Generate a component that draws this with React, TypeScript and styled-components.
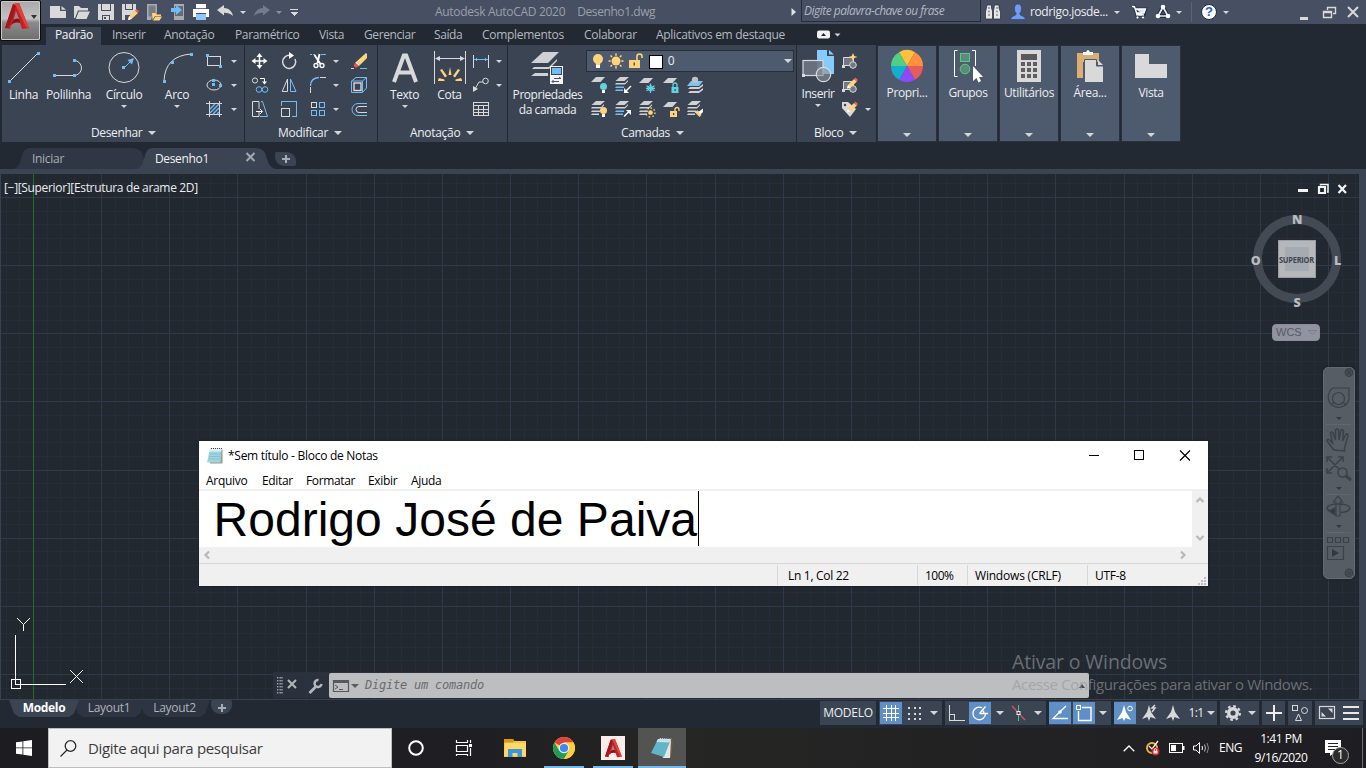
import React from "react";
import styled, { createGlobalStyle, css } from "styled-components";

const C = {
  frame: "#222932",
  panel: "#3b4453",
  title: "#474f62",
  tile: "#4e5a6d",
  canvas: "#212830",
  ink: "#d9d9d9",
  blue: "#70bdf5",
  gold: "#ffd37a",
  cyan: "#5fd4e0",
  on: "#5f8fc5",
};

const Global = createGlobalStyle`
  html, body { margin: 0; padding: 0; background: ${C.frame}; }
  *, *::before, *::after { box-sizing: border-box; }
  svg { display: block; flex: none; overflow: visible; }
`;

const Screen = styled.div`
  position: relative;
  width: 1366px;
  height: 768px;
  overflow: hidden;
  display: flex;
  flex-direction: column;
  background: ${C.frame};
  color: #eceef0;
  font: 12px/16px "Open Sans", "Noto Sans", sans-serif;
  letter-spacing: -0.3px;
  white-space: nowrap;
`;

const Text = styled.span<{ $ls?: number; $size?: number }>`
  letter-spacing: ${(p) => p.$ls ?? -0.3}px;
  ${(p) => p.$size && css`font-size: ${p.$size}px;`}
`;

const Arrow = styled.i<{ $w?: number; $c?: string }>`
  flex: none;
  width: 0;
  height: 0;
  border: solid transparent;
  border-width: ${(p) => ((p.$w ?? 6) > 6 ? 4 : 3)}px ${(p) => (p.$w ?? 6) / 2}px 0;
  border-top-color: ${(p) => p.$c ?? "#d4d6da"};
`;

const Cell = styled.div<{ $w: number; $align?: string }>`
  flex: none;
  width: ${(p) => p.$w}px;
  display: flex;
  align-items: center;
  justify-content: ${(p) => p.$align ?? "center"};
`;

type IconProps = { w?: number; h?: number; children: React.ReactNode; crisp?: boolean };
const Icon = ({ w = 16, h = 16, children, crisp }: IconProps) => (
  <svg width={w} height={h} viewBox={`0 0 ${w} ${h}`} fill="none" stroke={C.ink} strokeWidth="1" shapeRendering={crisp ? "crispEdges" : "auto"}>
    {children}
  </svg>
);

/* ---------- title bar ---------- */

const TitleBar = styled.header`
  height: 24px;
  flex: none;
  display: flex;
  align-items: center;
  background: ${C.title};
  padding-left: 46px;
`;

const TitleText = styled.div`
  flex: none;
  width: 359px;
  padding-left: 130px;
  display: flex;
  gap: 12px;
  color: #9aa0ab;
`;

const SearchField = styled.div`
  flex: none;
  width: 180px;
  height: 22px;
  margin-bottom: 2px;
  padding: 3px 0 0 2px;
  border: 1px solid #262d38;
  border-top: 0;
  background: ${C.title};
  color: #b3b8c1;
  font-style: italic;
`;

const Divider = styled.i`
  width: 1px;
  height: 20px;
  background: #5a6377;
`;

const AppButton = styled.div`
  position: absolute;
  left: 0;
  top: 0;
  width: 41px;
  height: 41px;
  border: 1px solid #0c0c0c;
  border-radius: 2px;
  background: linear-gradient(#a9a9a9, #c2c2c2 45%, #8b8b8b 55%, #6e6e6e);
  box-shadow: inset 0 0 0 1px #c9c9c9;
  display: flex;
  align-items: center;
  padding: 0 0 8px 4px;
  gap: 2px;
`;

const ALogo = ({ w, h }: { w: number; h: number }) => (
  <svg width={w} height={h} viewBox="0 0 24 27">
    <path d="M0 25L8 1L14 0L24 25L17 26L15 20Q10 18 6 22L5 26Z" fill="#c32127" />
    <path d="M8 1L14 0L24 25L21 24L11 3Z" fill="#e0433f" />
    <path d="M8 1L11 3L8 14L3 25L0 25Z" fill="#a5161c" />
    <path d="M11 8L14 16Q11 15 8.500 17Z" fill="#8e8e8e" />
    <path d="M8.500 17Q11 15 14 16L15 20Q10 18 6 22Z" fill="#8f1014" />
  </svg>
);

const pencil = (
  <g stroke="none">
    <path d="M6 16L7 12.500L13 6.500L16 9L9.500 15Z" fill={C.gold} />
    <path d="M13 6.500L14.500 5L17 7.500L15.700 9Z" fill="#f0605c" />
    <path d="M6 16L7 12.500L9.500 15Z" fill="#fff" />
  </g>
);

const NewFile = () => (
  <Icon><path stroke="none" fill={C.ink} d="M0 2H10V7H16V14H0ZM11.500 2L16 5.800H11.500Z" /></Icon>
);
const OpenFile = () => (
  <Icon><path stroke="none" fill={C.ink} d="M0 2H5L7 4H14V6.500H4L1 14H0ZM4.800 7.500H16L12.500 15H1.800Z" /></Icon>
);
const Save = () => (
  <Icon><path stroke="none" fill={C.ink} fillRule="evenodd" d="M0 0H3V7H13V0H16V16H12V11H4V16H0ZM4 0H12V6H4ZM5 12H11V16H5ZM6 13V15H8V13Z" /></Icon>
);
const SaveAs = () => (
  <Icon><path stroke="none" fill={C.ink} fillRule="evenodd" d="M0 0H3V6H11V0H14V6L9 11H3V16H0ZM4 0H10V5H4Z" />{pencil}</Icon>
);
const MobileOpen = () => (
  <Icon>
    <path stroke="none" fill="#a8abb0" d="M0 0H10V9H6L4 16H0Z" />
    <rect x="1.500" y="1.500" width="7" height="11" stroke="none" fill="#777c86" />
    <path stroke="none" fill={C.gold} d="M5 9H9L10 10.500H14V12H8L5.500 16ZM8.500 12.500H15L12.500 16.500H6Z" />
  </Icon>
);
const MobileSave = () => (
  <Icon>
    <path stroke="none" fill="#a8abb0" d="M3 0H13V16H3Z" />
    <rect x="4" y="2" width="8" height="10" stroke="none" fill="#646b78" />
    <path stroke="none" fill={C.blue} d="M0 4H5V1L11 6L5 11V8H0Z" />
  </Icon>
);
const Printer = () => (
  <Icon>
    <path stroke="none" fill="#fff" d="M3 0H13V4H3ZM0 5H16V13H13V9H3V13H0Z" />
    <rect x="3" y="10" width="10" height="6" stroke="none" fill="#8cc8f8" />
    <path d="M3 4.500H13" stroke="#6b7280" />
  </Icon>
);
const Undo = ({ dim, flip }: { dim?: boolean; flip?: boolean }) => (
  <Icon>
    <g transform={flip ? "translate(16 -1) scale(-1 1)" : "translate(0 -1)"}>
      <path stroke="none" fill={dim ? "#747b8a" : C.ink} d="M0 7L7 2V5Q14 5 16 13Q12 9.500 7 9.700V12.500Z" />
    </g>
  </Icon>
);

const Binoculars = () => (
  <Icon>
    <path stroke="#2f3645" fill="#e8e8e8" strokeWidth="0.800" d="M2 1H6.500V4L7.500 7V15H0.500V8ZM9.500 1H14V4L15.500 8V15H8.500V7Z" />
    <path stroke="#59606f" d="M4 3V13M12 3V13" strokeDasharray="2 1.500" />
  </Icon>
);
const UserIcon = () => (
  <Icon>
    <path stroke="#26407e" strokeWidth="0.600" fill="#6f9cf2" d="M8 0Q11.500 0 11.500 4.500Q11.500 8 9.700 9.500Q9.700 11.300 12.500 12Q15 12.700 15.500 15.500H0.500Q1 12.700 3.500 12Q6.300 11.300 6.300 9.500Q4.500 8 4.500 4.500Q4.500 0 8 0Z" />
  </Icon>
);
const Cart = () => (
  <Icon>
    <path stroke="#252e49" strokeWidth="3.200" d="M1 2.500H3.500L6 11H13L14.500 5H5" />
    <path fill="#dfe3ec" stroke="#fff" strokeWidth="1.300" d="M1 2.500H3.500L6 11H13M4.500 5H14.500L13 9H5.500Z" />
    <circle cx="6.500" cy="13.500" r="1.500" fill="#fff" stroke="#252e49" strokeWidth="0.700" />
    <circle cx="12" cy="13.500" r="1.500" fill="#fff" stroke="#252e49" strokeWidth="0.700" />
  </Icon>
);
const Network = () => (
  <Icon>
    <path stroke="#252e49" strokeWidth="4" strokeLinejoin="round" d="M8 3L3 12H13Z" />
    <path stroke="#e6e9f0" strokeWidth="1.700" d="M8 3L3 12H13Z" />
    <g fill="#fff" stroke="none"><circle cx="8" cy="3" r="2.300" /><circle cx="3" cy="12" r="2.300" /><circle cx="13" cy="12" r="2.300" /></g>
  </Icon>
);
const HelpDot = styled.i`
  width: 16px;
  height: 16px;
  border-radius: 50%;
  border: 1px solid #232b3c;
  background: #fafafa;
  color: #2560c0;
  font: bold 13px/14px "Liberation Sans", sans-serif;
  text-align: center;
  letter-spacing: 0;
`;

const TopBar = () => (
  <TitleBar>
    <Cell $w={24}><NewFile /></Cell>
    <Cell $w={24}><OpenFile /></Cell>
    <Cell $w={24}><Save /></Cell>
    <Cell $w={24}><SaveAs /></Cell>
    <Cell $w={26}><MobileOpen /></Cell>
    <Cell $w={21}><MobileSave /></Cell>
    <Cell $w={24}><Printer /></Cell>
    <Cell $w={24}><Undo /></Cell>
    <Cell $w={12}><Arrow $w={6} /></Cell>
    <Cell $w={26}><Undo dim flip /></Cell>
    <Cell $w={8}><Arrow $w={6} $c="#8a909c" /></Cell>
    <Cell $w={22}>
      <Icon w={8} h={8} crisp><path d="M0 1.500H8" /><path stroke="none" fill={C.ink} d="M0 4H8L4 8Z" /></Icon>
    </Cell>
    <TitleText><Text $ls={-0.3}>Autodesk AutoCAD 2020</Text><Text $ls={-0.42}>Desenho1.dwg</Text></TitleText>
    <Cell $w={137} $align="flex-end"><Icon w={10} h={10}><path stroke="none" fill="#e0e2e6" d="M0.500 1V9L5 5Z" /></Icon></Cell>
    <SearchField><Text $ls={-0.5}>Digite palavra-chave ou frase</Text></SearchField>
    <Cell $w={24}><Binoculars /></Cell>
    <Cell $w={25}><UserIcon /></Cell>
    <Cell $w={82} $align="flex-start"><Text $ls={-0.38}>rodrigo.josde...</Text></Cell>
    <Cell $w={10}><Arrow $w={6} /></Cell>
    <Cell $w={34}><Cart /></Cell>
    <Cell $w={14}><Network /></Cell>
    <Cell $w={18}><Arrow $w={6} /></Cell>
    <Cell $w={6}><Divider /></Cell>
    <Cell $w={30}><HelpDot>?</HelpDot></Cell>
    <Cell $w={4}><Arrow $w={6} /></Cell>
    <Cell $w={131} $align="flex-end">
      <Icon w={59} h={14}>
        <path d="M0 13.500H8" strokeWidth="3" />
        <path d="M27.500 5V2.500H35.500V8.500H33M23.500 6.500H31.500V12.500H23.500ZM23 7.500H32" strokeWidth="1.400" />
        <path d="M48 2L58 12M58 2L48 12" strokeWidth="2" />
      </Icon>
    </Cell>
  </TitleBar>
);

/* ---------- ribbon tabs ---------- */

const RibbonTabs = styled.nav`
  height: 21px;
  flex: none;
  display: flex;
  align-items: flex-end;
  padding-left: 46px;
`;

const RibbonTab = styled.div<{ $w: number; $active?: boolean }>`
  flex: none;
  width: ${(p) => p.$w}px;
  height: 18px;
  line-height: 15px;
  color: #b4b9c1;
  ${(p) => p.$active && css`
    margin-right: 11px;
    padding-left: 9px;
    background: ${C.panel};
    color: #f2f3f4;
  `}
`;

const TABS: [string, number, number][] = [
  ["Inserir", 52, -0.35], ["Anotação", 71, -0.3], ["Paramétrico", 84, -0.37], ["Vista", 45, -0.35],
  ["Gerenciar", 70, -0.4], ["Saída", 48, -0.4], ["Complementos", 102, -0.3], ["Colaborar", 72, -0.3],
  ["Aplicativos em destaque", 161, -0.3],
];

/* ---------- ribbon panels ---------- */

const Ribbon = styled.section`
  height: 97px;
  flex: none;
  display: flex;
  gap: 1px;
  padding-left: 2px;
`;

const Panel = styled.div<{ $w: number }>`
  width: ${(p) => p.$w}px;
  height: 97px;
  background: ${C.panel};
  display: flex;
  flex-direction: column;
`;

const PanelBody = styled.div`
  height: 78px;
  display: flex;
`;

const PanelName = styled.div<{ $x?: number }>`
  height: 19px;
  padding-left: ${(p) => p.$x ?? 0}px;
  padding-top: 1px;
  display: flex;
  align-items: center;
  gap: 6px;
`;

const BigButton = styled.div<{ $w: number; $top?: number }>`
  width: ${(p) => p.$w}px;
  padding-top: ${(p) => p.$top ?? 6}px;
  display: flex;
  flex-direction: column;
  align-items: center;
  line-height: 15px;
  text-align: center;
  & > svg { margin-bottom: 4px; }
  & > i { margin-top: 3px; }
`;

const ToolGrid = styled.div<{ $cols: string; $rows?: number; $top?: number }>`
  display: grid;
  padding-top: ${(p) => p.$top ?? 4}px;
  grid-template-columns: ${(p) => p.$cols};
  grid-template-rows: repeat(${(p) => p.$rows ?? 3}, 24px);
  align-items: center;
  justify-items: center;
`;

const dot = (x: number, y: number) => <rect x={x - 1.5} y={y - 1.5} width="3" height="3" fill={C.blue} stroke="none" />;

const DrawPanel = () => (
  <Panel $w={242}>
    <PanelBody>
      <BigButton $w={43}><Icon w={32} h={32}><path d="M2 30L30 2" />{dot(1.5, 30.5)}{dot(30.5, 2.5)}</Icon><Text>Linha</Text></BigButton>
      <BigButton $w={47}><Icon w={32} h={32}><path d="M1 24.500H21M21 9.500A7.500 7.500 0 0 1 21 24.500" />{dot(1.5, 24.5)}{dot(21.5, 24.5)}{dot(21.5, 9.5)}</Icon><Text>Polilinha</Text></BigButton>
      <BigButton $w={64}><Icon w={32} h={32}><circle cx="16" cy="16.500" r="15" /><path stroke={C.blue} d="M16 17L23 10" />{dot(15.5, 16.5)}<path fill={C.blue} stroke="none" d="M26 7L19.500 9L24 13.500Z" /></Icon><Text>Círculo</Text><Arrow $w={6} /></BigButton>
      <BigButton $w={42}><Icon w={32} h={32}><path d="M3 30Q4 5 30 3" />{dot(3.5, 30.5)}{dot(11.5, 11.5)}{dot(30.5, 3.5)}</Icon><Text>Arco</Text><Arrow $w={6} /></BigButton>
      <ToolGrid $cols="32px 8px">
        <Icon crisp><rect x="1.500" y="3.500" width="13" height="9" />{dot(1.5, 2.5)}{dot(14.5, 13.5)}</Icon><Arrow $w={6} />
        <Icon><ellipse cx="8" cy="8" rx="7" ry="5" />{dot(7.5, 7.5)}{dot(7.5, 3.5)}{dot(14.5, 8.5)}</Icon><Arrow $w={6} />
        <Icon><path d="M3.500 0V16M13.500 0V16M0 2.500H16M0 13.500H16" /><path stroke={C.blue} d="M4 8L9 3M4 12L13 3M7 13L13 7M11 13L13 11" strokeWidth="1.400" /></Icon><Arrow $w={6} />
      </ToolGrid>
    </PanelBody>
    <PanelName $x={89}><Text $ls={-0.35}>Desenhar</Text><Arrow $w={8} /></PanelName>
  </Panel>
);

const ModifyPanel = () => (
  <Panel $w={132}>
    <PanelBody>
      <ToolGrid $cols="29px 30px 27px 10px 36px">
        <Icon><path stroke="#fff" strokeWidth="1.500" d="M7.500 2V14M2 8H14" /><path fill="#fff" stroke="none" d="M7.500 0L10.500 4H4.500ZM7.500 16L4.500 12H10.500ZM-0.500 8L3.500 5V11ZM15.500 8L11.500 11V5Z" /></Icon>
        <Icon><path strokeWidth="1.500" d="M9.500 2.500A6.500 6.500 0 1 0 14 6" /><path fill="#fff" stroke="none" d="M8 -1L13 2.500L8 6Z" /></Icon>
        <Icon><path stroke={C.blue} strokeDasharray="2 1" d="M0 1.500H6" /><path d="M11 1.500H16" stroke={C.blue} /><path stroke="#fff" strokeWidth="1.900" d="M4.500 2L10.500 11M9.500 1L7.500 10" /><circle cx="6" cy="12.500" r="2" stroke="#fff" strokeWidth="1.300" /><circle cx="12" cy="12.500" r="2" stroke="#fff" strokeWidth="1.300" /></Icon>
        <Arrow $w={6} />
        <Icon><path fill={C.gold} stroke="none" d="M15 0L16 1V5L9 12L5.500 8.500Z" /><path fill="#f6f6f6" stroke="none" d="M5.500 8.500L9 12L7.800 13L4.300 9.800Z" /><path fill="#f0504c" stroke="none" d="M4.300 9.800L7.800 13Q5.500 15.500 3.500 14Q2 12 4.300 9.800Z" /><path d="M0 15.500H3" /><path stroke={C.blue} d="M9 15.500H16" /></Icon>

        <Icon><circle cx="3" cy="3.500" r="2.600" /><path d="M8 1.500H12.500V5" stroke="#fff" /><path fill="#fff" stroke="none" d="M10 4.500H15L12.500 7.500Z" /><g stroke={C.blue}><circle cx="7" cy="12.500" r="2.800" /><circle cx="13" cy="12.500" r="2.800" /></g></Icon>
        <Icon><path d="M6.500 2V14.500H1.200Z" /><path d="M9.500 2V14.500H15Z" stroke={C.blue} /></Icon>
        <Icon><path stroke={C.blue} d="M0.500 9Q0.500 1 9 0.500" strokeWidth="1.300" /><path d="M0.500 10V16M10 0.500H16" /></Icon>
        <Arrow $w={6} />
        <Icon><rect x="3" y="6" width="7" height="7.500" strokeWidth="1.400" /><path stroke={C.blue} d="M0.500 4L5 0.500H15.500V11L11.500 15.500H0.500ZM0.500 4H11.500V15M11.500 4L15.500 0.500" /></Icon>

        <Icon><path d="M7 11V15.500H0.500V0.500H7V8" /><path stroke="#fff" d="M4 10.500H10M8 8L10.500 10.500L8 13" /><path stroke={C.blue} d="M9 0.500H10.500L15.500 15.500H8" /></Icon>
        <Icon crisp><path stroke={C.blue} d="M0.500 5V0.500H15.500V15.500H11" /><rect x="0.500" y="7.500" width="8" height="8" /></Icon>
        <Icon crisp><rect x="1.500" y="1.500" width="5" height="5" /><g stroke={C.blue}><rect x="9.500" y="1.500" width="5" height="5" /><rect x="1.500" y="9.500" width="5" height="5" /><rect x="9.500" y="9.500" width="5" height="5" /></g></Icon>
        <Arrow $w={6} />
        <Icon><path d="M16 5.500H8A3 3 0 0 0 8 11.500H16" /><path stroke={C.blue} d="M16 2.500H7A6 6 0 0 0 7 14.500H16" /></Icon>
      </ToolGrid>
    </PanelBody>
    <PanelName $x={33}><Text>Modificar</Text><Arrow $w={8} /></PanelName>
  </Panel>
);

const AnnotatePanel = () => (
  <Panel $w={129}>
    <PanelBody>
      <BigButton $w={53}><Icon w={32} h={32}><path strokeWidth="4" d="M5 31L14.800 4.500H17.200L27 31M8.500 21.500H23.500" /></Icon><Text $ls={-0.4}>Texto</Text><Arrow $w={6} /></BigButton>
      <BigButton $w={37}>
        <Icon w={32} h={32}>
          <path d="M0.500 0V33M31.500 0V33M3 7.500H29" /><path fill={C.ink} stroke="none" d="M1 7.500L6 5V10ZM31 7.500L26 5V10Z" />
          <path fill={C.gold} stroke="none" d="M16 16L17.500 24H14.500ZM6 19L8 18L13 25L11 26.500ZM26 19L24 18L19 25L21 26.500ZM4 29L5 27L10.500 28.500V30H4ZM28 29L27 27L21.500 28.500V30H28Z" />
        </Icon><Text $ls={-0.35}>Cota</Text>
      </BigButton>
      <ToolGrid $cols="26px 10px">
        <Icon crisp><path d="M0.500 2V15M15.500 2V15" /><path d="M1 6.500H15M3.500 5V8M12.500 5V8" stroke={C.blue} /></Icon><Arrow $w={6} />
        <Icon><circle cx="12.500" cy="4" r="2.800" /><path d="M10 5H6L2 12" /><path fill={C.ink} stroke="none" d="M0 15V9L5 12Z" /></Icon><Arrow $w={6} />
        <Icon crisp><rect x="0.500" y="1.500" width="15" height="13" /><path d="M0 4.500H16M0 8.500H16M0 11.500H16M5.500 5V14M10.500 5V14" /></Icon>
      </ToolGrid>
    </PanelBody>
    <PanelName $x={32}><Text>Anotação</Text><Arrow $w={8} /></PanelName>
  </Panel>
);

const LayerCombo = styled.div`
  width: 208px;
  height: 22px;
  margin: 5px 0 1px -1px;
  border: 1px solid #272e39;
  background: ${C.tile};
  display: flex;
  align-items: center;
`;

const Swatch = styled.i`
  width: 14px;
  height: 14px;
  border: 1px solid #000;
  background: #fff;
  margin-top: 2px;
`;

const sheet = (y: number, c = "#cfd1d4") => <path stroke="none" fill={c} d={`M5 ${y}H14L9.500 ${y + 5}H0Z`} />;
const stack = (mid = "#cfd1d4") => (
  <g stroke="none">
    <path fill="#cfd1d4" d="M5 0H14L9.500 4H0.500Z" />
    <path fill="#cfd1d4" d="M1 6H10L13 3V4.500L10 7.500H0Z" />
    <path fill={mid} d="M1 9.500H9V11H0ZM1 12.500H8V14H0Z" />
  </g>
);
const miniBulb = (c: string) => <g stroke="none"><circle cx="12.500" cy="9.500" r="3.500" fill={c} /><rect x="11" y="13" width="3" height="3" fill="#fff" /></g>;
const miniLock = (c: string, open?: boolean) => (
  <g><path stroke={c} strokeWidth="1.300" d={open ? "M12 10V8.500A2 2 0 0 1 16 8.500V10" : "M10 10V8A2 2 0 0 1 14 8V10"} /><rect x={open ? 7 : 8.5} y="10" width="7" height="6" fill={c} stroke="none" /><rect x={open ? 10 : 11.5} y="12" width="1.200" height="2" fill={C.panel} stroke="none" /></g>
);

const LayersPanel = () => (
  <Panel $w={288}>
    <PanelBody>
      <BigButton $w={79}>
        <Icon w={32} h={32}>
          <g stroke="none" fill="#cfd1d4" transform="translate(-1 0)">
            <path d="M12 1H28L17 12H0Z" /><path d="M1 18L3 16H18L26 8V10L18 18ZM0 25L4 22H17V25Z" />
            <rect x="19" y="15" width="13" height="18" fill="#f3f3f3" />
            <rect x="20.500" y="16.500" width="10" height="7" fill={C.blue} stroke="#3b4453" />
            <path d="M23 27.500H30M21 30.500H28M28 26L30 27.500M22.500 29L21 30.500L22.500 32" stroke="#4c5361" />
          </g>
        </Icon>
        <Text $ls={-0.45}>Propriedades<br />da camada</Text>
      </BigButton>
      <div>
        <LayerCombo>
          <Cell $w={22}><Icon><circle cx="8" cy="6" r="5" fill={C.gold} stroke="none" /><path fill={C.gold} stroke="none" d="M5 8H11L10 12H6Z" /><rect x="6" y="12" width="4" height="3" fill="#fff" stroke="none" /></Icon></Cell>
          <Cell $w={14}><Icon><circle cx="8" cy="8" r="4.500" fill={C.gold} stroke="none" /><path stroke={C.gold} strokeWidth="1.600" d="M8 0.500V2.700M8 13.300V15.500M0.500 8H2.700M13.300 8H15.500M2.500 2.500L4 4M12 12L13.500 13.500M13.500 2.500L12 4M4 12L2.500 13.500" /></Icon></Cell>
          <Cell $w={23}><Icon><rect x="2" y="7" width="11" height="8" fill={C.gold} stroke="none" /><path stroke={C.gold} strokeWidth="1.600" d="M10 7V3.500A2.500 2.500 0 0 1 15 3.500V5" /><rect x="6.500" y="9.500" width="1.500" height="3" fill={C.tile} stroke="none" /></Icon></Cell>
          <Cell $w={19}><Swatch /></Cell>
          <Cell $w={119} $align="flex-start"><Text>&nbsp;0</Text></Cell>
          <Arrow $w={8} />
        </LayerCombo>
        <ToolGrid $cols="repeat(5, 24px)" $rows={2} $top={0}>
          <Icon>{sheet(0)}{miniBulb(C.cyan)}</Icon>
          <Icon>{stack(C.blue)}<path stroke="#fff" strokeWidth="1.500" d="M16 9L11 14" /><path fill="#fff" stroke="none" d="M9 16V11L14 16Z" /></Icon>
          <Icon>{sheet(1)}<path stroke={C.cyan} strokeWidth="1.300" d="M11.500 6.500V16M7.500 8.700L15.500 13.800M15.500 8.700L7.500 13.800M7 11.300H16" /><circle cx="11.500" cy="11.300" r="2.600" stroke={C.cyan} /></Icon>
          <Icon>{sheet(1)}{miniLock(C.cyan)}</Icon>
          <Icon><path stroke="none" fill="#cfd1d4" d="M1 12L3 10H12L16 7V9L12 12ZM1 16L3 14H12L16 11V13L12 16Z" /><path stroke="none" fill="#7fc4f7" d="M4 4H16L12 9H0Z" /><circle cx="8" cy="3" r="3.200" fill="#bfc1c5" stroke="none" /></Icon>
          <Icon>{stack()}{miniBulb(C.gold)}</Icon>
          <Icon>{stack(C.blue)}<path stroke="#fff" strokeWidth="1.500" d="M9 15.500L14 10.500" /><path fill="#fff" stroke="none" d="M16 9V14L11 9Z" /></Icon>
          <Icon>{stack()}<circle cx="11.500" cy="11.500" r="2.600" fill={C.gold} stroke={C.panel} strokeWidth="0.500" /><path stroke={C.gold} strokeWidth="1.400" strokeDasharray="1.500 2" d="M11.500 7A4.500 4.500 0 1 1 11.400 7" /></Icon>
          <Icon>{sheet(1)}{miniLock(C.gold, true)}</Icon>
          <Icon>{stack()}<path fill="#fff" stroke="none" d="M10 9L12 10.500L16 7.500V11L13 14Z" /><path fill={C.gold} stroke="none" d="M7.500 11L12.500 16L14.500 14L10 9.500Z" /></Icon>
        </ToolGrid>
      </div>
    </PanelBody>
    <PanelName $x={113}><Text $ls={-0.4}>Camadas</Text><Arrow $w={8} /></PanelName>
  </Panel>
);

const blockMini = <g><path fill="#737984" d="M1.500 4.500H11.500V12.500H1.500Z" /><circle cx="11" cy="12" r="3.300" fill="#737984" /><rect x="0" y="12" width="3" height="3" fill={C.ink} stroke="none" /></g>;

const BlockPanel = () => (
  <Panel $w={79}>
    <PanelBody>
      <BigButton $w={42} $top={5}>
        <Icon w={32} h={32}>
          <path fill="#86cbfb" stroke="none" d="M15 0H25V6H32V24H15Z" /><path fill="#86cbfb" stroke="none" d="M27 0L32 4.500H27Z" />
          <rect x="1" y="10.500" width="20" height="15" fill="#6f7682" fillOpacity="0.900" strokeWidth="1.200" />
          <circle cx="21.500" cy="24.500" r="7.200" fill="#8c929c" fillOpacity="0.600" strokeWidth="1.200" />
          <rect x="0" y="24" width="3" height="3" fill={C.ink} stroke="none" />
        </Icon>
        <Text $ls={-0.45}>Inserir</Text><Arrow $w={6} />
      </BigButton>
      <ToolGrid $cols="22px 14px">
        <Icon>{blockMini}<path stroke="none" fill={C.gold} d="M11 0L12.300 3L15.500 4L12.300 5L11 8.500L9.700 5L6.500 4L9.700 3Z" /></Icon><span />
        <Icon>{blockMini}<g transform="translate(-1 -4.500)">{pencil}</g></Icon><span />
        <Icon><path stroke="none" fill={C.ink} d="M0 1H6L14 8L8 16L0 7Z" /><circle cx="3" cy="4" r="1.200" fill={C.panel} stroke="none" /><g transform="translate(-1 -4.500)">{pencil}</g></Icon><Arrow $w={6} />
      </ToolGrid>
    </PanelBody>
    <PanelName $x={17}><Text>Bloco</Text><Arrow $w={8} /></PanelName>
  </Panel>
);

const Collapsed = styled.div`
  width: 60px;
  height: 97px;
  border: 1px solid #2a313c;
  background: ${C.tile};
  display: flex;
  flex-direction: column;
  align-items: center;
  padding: 4px 0 4px;
  & > span { margin: 3px 0 auto; line-height: 15px; }
`;

const WHEEL = ["#ffc13d", "#ff913e", "#e85a5c", "#8a4bfb", "#12b0cb", "#50cf86"];
const ColorWheel = () => (
  <Icon w={32} h={32}>
    {WHEEL.map((c, i) => {
      const a = ((i * 60 - 120) * Math.PI) / 180;
      const b = a + Math.PI / 3;
      const p = (t: number) => `${(16 + 16 * Math.cos(t)).toFixed(2)} ${(16 + 16 * Math.sin(t)).toFixed(2)}`;
      return <path key={c} fill={c} stroke="none" d={`M16 16L${p(a)}A16 16 0 0 1 ${p(b)}Z`} />;
    })}
  </Icon>
);

const COLLAPSED: [string, React.ReactNode][] = [
  ["Propri...", <ColorWheel />],
  ["Grupos", (
    <Icon w={32} h={32}>
      <path stroke="#fff" d="M5.500 0.500H2.500V26.500H5.500M20 0.500H23.500V16" />
      <g stroke="#4fcf80" fill="#5d8a7c"><rect x="8.500" y="3.500" width="9" height="8" /><circle cx="13" cy="19" r="4.800" /></g>
      <path stroke="none" fill="#fff" d="M21 16V31L24.500 28L26.500 32.500L29 31L27 27H31Z" />
    </Icon>
  )],
  ["Utilitários", (
    <Icon w={32} h={32} crisp>
      <rect x="4" y="0" width="24" height="32" fill={C.ink} stroke="none" /><rect x="8" y="4" width="16" height="6" fill="#5a5a5a" stroke="none" />
      <g fill="#5f5f5f" stroke="none">{[8, 14, 20].map((x) => [12, 18, 24].map((y) => <rect key={`${x}-${y}`} x={x} y={y} width="4" height="4" />))}</g>
    </Icon>
  )],
  ["Área...", (
    <Icon w={32} h={32}>
      <path fill="#dcae72" stroke="none" d="M3 3H25V12H9V28H3Z" /><path fill="#fff" stroke="none" d="M9 5V2H12Q14 -2 16 2H19V5Z" />
      <path fill={C.ink} stroke={C.tile} d="M10.500 9.500H22.500V16H29.500V32.500H10.500Z" /><path fill={C.ink} stroke="none" d="M24 10L29 15H24Z" />
    </Icon>
  )],
  ["Vista", <Icon w={32} h={32}><path fill={C.ink} stroke="none" d="M0 4H14V14H32V28H0Z" /></Icon>],
];

/* ---------- document tabs ---------- */

const DocTabs = styled.div`
  height: 32px;
  flex: none;
  display: flex;
  align-items: flex-end;
  padding: 0 0 5px 14px;
  background: linear-gradient(${C.frame} 27px, ${C.panel} 27px);
`;

const DocTab = styled.div<{ $active?: boolean }>`
  width: 138px;
  height: 22px;
  margin-right: -15px;
  padding: 4px 0 0 18px;
  display: flex;
  align-items: flex-start;
  line-height: 15px;
  background: ${(p) => (p.$active ? C.panel : "#2f3744")};
  color: ${(p) => (p.$active ? "#f0f1f2" : "#a9aeb7")};
  clip-path: path("M0 22 Q5 20 7 12 Q9 1 15 1 H119 Q128 1 130 12 Q132 20 138 22 Z");
`;

const PlusTab = styled.div<{ $bottom?: boolean }>`
  width: 21px;
  height: 14px;
  margin-bottom: ${(p) => (p.$bottom ? 0 : 3)}px;
  border-radius: ${(p) => (p.$bottom ? "2px 2px 9px 9px" : "2px 9px 2px 9px")};
  background: ${C.panel};
  display: flex;
  align-items: center;
  justify-content: center;
  padding-top: ${(p) => (p.$bottom ? 2 : 0)}px;
`;

const Plus = () => <Icon w={8} h={8} crisp><path strokeWidth="2" stroke="#a8adb5" d="M4 0V8M0 4H8" /></Icon>;

/* ---------- drawing area ---------- */

const Workspace = styled.main`
  position: relative;
  height: 525px;
  flex: none;
  background: ${C.canvas};
  border-left: 1px solid #394252;
  border-right: 7px solid ${C.panel};
`;

const Pin = styled.div<{ $x: number; $y: number }>`
  position: absolute;
  left: ${(p) => p.$x - 1}px;
  top: ${(p) => p.$y - 174}px;
`;

const GridLines = () => {
  const step = 13.632;
  const v = Array.from({ length: 103 }, (_, i) => ({ at: Math.round(34 + (i - 2) * step) - 1.5, major: (i - 2) % 5 === 0 }));
  const h = Array.from({ length: 42 }, (_, i) => ({ at: Math.round(197 + (i - 1) * step) - 173.5, major: (i - 1) % 5 === 0 }));
  return (
    <svg width="1358" height="525" viewBox="0 0 1358 525" shapeRendering="crispEdges">
      {[false, true].map((m) => (
        <g key={String(m)} stroke={m ? "#30394a" : "#262d38"}>
          {h.filter((l) => l.major === m && l.at < 525).map((l) => <path key={l.at} d={`M0 ${l.at}H1358`} />)}
          {v.filter((l) => l.major === m && l.at < 1358).map((l) => <path key={l.at} d={`M${l.at} 0V525`} />)}
        </g>
      ))}
      <path stroke="#207024" d="M32.500 0V525" />
    </svg>
  );
};

const Ucs = () => (
  <svg width="76" height="76" viewBox="0 0 76 76" fill="none" stroke="#fff">
    <g shapeRendering="crispEdges"><path d="M4.500 18V67.500H55" /><rect x="0.500" y="62.500" width="9" height="9" /></g>
    <path d="M6 1L12.500 7.500L19 1M12.500 7.500V14M59 53L72 66M72 53L59 66" />
  </svg>
);

const ViewCube = () => (
  <svg width="90" height="96" viewBox="0 0 90 96" fontFamily="Open Sans, sans-serif">
    <circle cx="45" cy="48" r="39.500" fill="none" stroke="#444a54" strokeWidth="9" />
    <rect x="26.500" y="29.500" width="37" height="37" fill="#b5b7ba" stroke="#9a9c9f" />
    <rect x="33" y="36" width="24" height="24" fill="#a4abb3" />
    <text x="44.500" y="52" textAnchor="middle" fontSize="9.500" fontWeight="700" fill="#40454d" textLength="35" lengthAdjust="spacingAndGlyphs">SUPERIOR</text>
    <g fontSize="12.500" fontWeight="800" fill="#b9bbbe" textAnchor="middle">
      <text x="45" y="12.500">N</text><text x="45" y="95.500">S</text><text x="3.500" y="54">O</text><text x="85.500" y="54">L</text>
    </g>
  </svg>
);

const WcsPill = styled.div`
  width: 48px;
  height: 17px;
  border-radius: 4px;
  border: 1px solid #8b8d98;
  background: #9193a0;
  color: #555966;
  display: flex;
  align-items: center;
  gap: 6px;
  padding: 0 0 1px 3px;
  font: 11px/14px "Liberation Sans", sans-serif;
  letter-spacing: 0;
`;

const NavBar = styled.div`
  width: 32px;
  height: 212px;
  border-radius: 5px;
  background: #575d64;
  border: 1px solid #666b71;
  box-shadow: 0 0 2px #14181d;
  & > svg { margin: 0 0 0 -1px; }
`;

const NavIcons = () => (
  <svg width="31" height="210" viewBox="0 0 31 210" fill="none" stroke="#3b4149" strokeWidth="1.200">
    <circle cx="26" cy="4.500" r="3.800" fill="#484e56" stroke="#3b4149" /><path d="M24 2.500L28 6.500M28 2.500L24 6.500" />
    <path d="M10 20H26V31A10.500 10.500 0 1 1 10 20Z" /><circle cx="15.500" cy="30.500" r="6" /><path d="M8 37L11 34M23 37L20 34" />
    <path d="M13 49H19L16 52Z M13 119H19L16 122Z M13 157H19L16 160Z" fill="#333941" stroke="none" />
    <path d="M3 56.500H28M3 126.500H28M3 164.500H28" stroke="#62676d" />
    <path strokeWidth="1.500" d="M11 82Q7 77 4 73Q4 71 6 71.500L9.500 75L7.500 65Q9 63 10 65L12.500 72L12.500 62Q14 60 15.500 62L16 72L18 62Q20 61 20.500 63L19.500 73L23 66Q25 65 25 68L21.500 80V83Z" />
    <path strokeWidth="1.500" d="M5 90L19 104M19 90L5 104M4 94V89H9M15 89H20V94M4 100V105H9" /><circle cx="19.500" cy="104.500" r="4.500" fill="#575d64" strokeWidth="1.500" /><path d="M23 108L28 112" strokeWidth="3" />
    <path d="M13 148V134H10.500L15 128L19.500 134H17V148Z" /><path strokeWidth="1.500" d="M12 144Q4 143 4 140Q5 136 15 136Q26 136 27 140Q26 144 18 144.500" /><path fill="#333941" d="M6 143L12 140V147Z" />
    <path d="M4.500 169.500H9.500V174.500H4.500ZM12.500 169.500H17.500V174.500H12.500ZM20.500 169.500H25.500V174.500H20.500ZM4.500 178.500H20.500V191.500H4.500Z" /><path d="M9 181V189L16 185Z" fill="#333941" stroke="none" />
    <circle cx="26" cy="205" r="3.800" fill="#484e56" /><path d="M24 204H28M24 206H28" />
  </svg>
);

/* ---------- command line ---------- */

const CommandDock = styled.div`
  width: 816px;
  height: 26px;
  display: flex;
  align-items: center;
  background: rgba(44, 50, 62, 0.9);
`;

const CommandInput = styled.div`
  width: 760px;
  height: 25px;
  margin: 1px 0 0 auto;
  padding-left: 4px;
  border-radius: 2px;
  background: #bcbec0;
  color: #6a6c6f;
  display: flex;
  align-items: center;
  gap: 2px;
  font: italic 12px/16px "DejaVu Sans Mono", monospace;
  & > span { margin: -1px 0 0 4px; letter-spacing: -0.22px; }
  & > i:last-child { margin-left: auto; margin-right: 4px; transform: rotate(180deg); }
`;

const Watermark = styled.div`
  color: rgba(150, 152, 154, 0.65);
  font-size: 15px;
  line-height: 20px;
`;

const WatermarkTitle = styled.div`
  font-size: 19.500px;
  line-height: 24px;
  letter-spacing: -0.15px;
`;

/* ---------- notepad ---------- */

const Notepad = styled.div`
  width: 1009px;
  height: 145px;
  background: #fff;
  color: #000;
  box-shadow: 0 0 2px #101318;
`;

const NoteTitle = styled.div`
  height: 30px;
  display: flex;
  align-items: center;
  padding: 0 18px 1px 8px;
  gap: 5px;
  & > svg:last-child { margin-left: auto; }
`;

const NoteMenu = styled.div`
  height: 20px;
  display: flex;
  align-items: center;
  padding: 1px 0 0 7px;
  border-bottom: 2px solid #f0f0f0;
`;

const NoteBody = styled.div`
  height: 56px;
  display: flex;
  background: #f0f0f0;
`;

const NotePage = styled.div`
  width: 993px;
  background: #fff;
  padding-left: 14.5px;
  display: flex;
  align-items: flex-start;
  overflow: hidden;
  font: 48px/57px "Liberation Sans", Arial, sans-serif;
  letter-spacing: 0.03px;
`;

const Caret = styled.i`
  width: 1px;
  height: 55px;
  margin-left: 1px;
  background: #000;
`;

const HScroll = styled.div`
  height: 16px;
  background: #f0f0f0;
  display: flex;
  align-items: center;
  justify-content: space-between;
  padding: 0 21px 1px 4px;
`;

const NoteStatus = styled.div`
  height: 23px;
  border-top: 1px solid #d7d7d7;
  background: #f0f0f0;
  display: flex;
  padding-left: 578px;
  & > svg { margin: 13px 0 0 auto; }
`;

const StatusField = styled.div<{ $w: number; $pad?: number }>`
  width: ${(p) => p.$w}px;
  height: 20px;
  margin-top: 1px;
  padding: 3px 0 0 ${(p) => p.$pad ?? 7}px;
  border-left: 1px solid #d7d7d7;
`;

const Chevron = ({ r }: { r: number }) => (
  <svg width="8" height="8" viewBox="0 0 8 8"><path transform={`rotate(${r} 4 4)`} d="M0.500 6L4 2.500L7.500 6" fill="none" stroke="#b8b8b8" strokeWidth="2.200" /></svg>
);

const VScroll = styled.div`
  width: 16px;
  display: flex;
  flex-direction: column;
  align-items: center;
  justify-content: space-between;
  padding: 5px 0 5px;
`;

const NoteIcon = ({ size = 16 }: { size?: number }) => (
  <svg width={size} height={size} viewBox="0 0 16 16">
    <path d="M4 1.500H15.500V15.500H3Z" fill="#9c9a86" /><path d="M3 0.500H14.500L13.500 14.500H0Z" fill="#9fd5de" /><path d="M3 0.500H14.500L14.200 3.500H2.500Z" fill="#e2eff1" />
    <path d="M2.500 6H14M2 8.500H13.500M1.500 11H13.300" stroke="#76bccb" strokeWidth="0.700" /><path d="M4 0.500H15" stroke="#444" strokeDasharray="1 1" />
  </svg>
);

const NotepadWindow = () => (
  <Notepad>
    <NoteTitle>
      <NoteIcon />
      <Text $ls={-0.28}>*Sem título - Bloco de Notas</Text>
      <svg width="101" height="11" viewBox="0 0 101 11" fill="none" stroke="#000"><path d="M0 5.500H10M45.500 0.500H54.500V9.500H45.500Z" shapeRendering="crispEdges" /><path d="M91 0.500L101 10.500M101 0.500L91 10.500" strokeWidth="1.200" /></svg>
    </NoteTitle>
    <NoteMenu>
      <Cell $w={56} $align="flex-start"><Text>Arquivo</Text></Cell>
      <Cell $w={44} $align="flex-start"><Text $ls={-0.35}>Editar</Text></Cell>
      <Cell $w={62} $align="flex-start"><Text $ls={-0.35}>Formatar</Text></Cell>
      <Cell $w={43} $align="flex-start"><Text>Exibir</Text></Cell>
      <Text>Ajuda</Text>
    </NoteMenu>
    <NoteBody>
      <NotePage>Rodrigo José de Paiva<Caret /></NotePage>
      <VScroll><Chevron r={0} /><Chevron r={180} /></VScroll>
    </NoteBody>
    <HScroll><Chevron r={-90} /><Chevron r={90} /></HScroll>
    <NoteStatus>
      <StatusField $w={140} $pad={10}><Text>Ln 1, Col 22</Text></StatusField>
      <StatusField $w={50}><Text $ls={-0.5}>100%</Text></StatusField>
      <StatusField $w={120}><Text $ls={-0.2}>Windows (CRLF)</Text></StatusField>
      <StatusField $w={60}><Text>UTF-8</Text></StatusField>
      <svg width="10" height="9" viewBox="0 0 10 9" fill="#bdbdbd"><path d="M6 0h2v2h-2zM3 3h2v2h-2zM6 3h2v2h-2zM0 6h2v2h-2zM3 6h2v2h-2zM6 6h2v2h-2z" /></svg>
    </NoteStatus>
  </Notepad>
);

/* ---------- model tabs and status bar ---------- */

const BottomBar = styled.div`
  height: 29px;
  flex: none;
  display: flex;
  border-top: 1px solid #3a4250;
  padding-left: 9px;
`;

const ModelTab = styled.div<{ $w: number; $active?: boolean }>`
  width: ${(p) => p.$w}px;
  height: 17px;
  margin-right: -6px;
  line-height: 16px;
  text-align: center;
  background: ${(p) => (p.$active ? C.panel : "#2d3542")};
  color: ${(p) => (p.$active ? "#fff" : "#aeb3bb")};
  font-weight: ${(p) => (p.$active ? 700 : 400)};
  z-index: ${(p) => (p.$active ? 1 : 0)};
  clip-path: polygon(0 0, 100% 0, calc(100% - 5px) 80%, calc(100% - 10px) 100%, 10px 100%, 5px 80%);
`;

const StatusTools = styled.div`
  width: 546px;
  margin-left: auto;
  padding-top: 1px;
  display: flex;
  gap: 3px;
`;

const Group = styled.div`
  flex: none;
  height: 24px;
  background: ${C.panel};
  display: flex;
  align-items: center;
`;

const Toggle = styled.div<{ $w?: number; $on?: boolean }>`
  flex: none;
  width: ${(p) => p.$w ?? 22}px;
  height: 22px;
  background: ${(p) => (p.$on ? C.on : "transparent")};
  display: flex;
  align-items: center;
  justify-content: center;
`;

const person = "M8 0L10 7L15 14L9.500 12L8 16L6.500 12L1 14L6 7Z";

const StatusBar = () => (
  <StatusTools>
    <Group><Toggle $w={56}><Text $ls={-0.25}>MODELO</Text></Toggle></Group>
    <Group>
      <Toggle $w={1} />
      <Toggle $on $w={22}><Icon crisp><path stroke="#fff" d="M3.500 0V16M8.500 0V16M12.500 0V16M0 3.500H16M0 8.500H16M0 12.500H16" /></Icon></Toggle>
      <Toggle $w={24}><Icon w={13} h={13} crisp><path strokeWidth="2" strokeDasharray="2 3.500" d="M0 1H13M0 6.500H13M0 12H13" /></Icon></Toggle>
      <Toggle $w={16}><Arrow $w={8} /></Toggle>
    </Group>
    <Group>
      <Toggle $w={24}><Icon crisp><path d="M0.500 0V15.500H16M0.500 9.500H5.500V15" /></Icon></Toggle>
      <Toggle $on><Icon><path stroke="#fff" strokeWidth="1.300" d="M13.500 8.500A6.300 6.300 0 1 1 10 2.800M7.500 8.500H16M7.500 8.500L13.500 1.500M10.500 5Q12 6.500 12 8.500" /></Icon></Toggle>
      <Toggle $w={17}><Arrow $w={8} /></Toggle>
      <Toggle $w={22}><Icon><path stroke="#45c878" d="M7.500 0V16" /><path stroke="#e2545a" strokeWidth="1.200" d="M1 1L14 15" /><rect x="6" y="6.500" width="3" height="3" fill={C.panel} stroke="#eee" /></Icon></Toggle>
      <Toggle $w={16}><Arrow $w={8} /></Toggle>
    </Group>
    <Group>
      <Toggle $on><Icon><path stroke="#fff" strokeWidth="1.300" d="M14 1L1 13.500H16" /><circle cx="8" cy="7" r="1.800" fill="#fff" stroke="none" /></Icon></Toggle>
      <Toggle $w={2} />
      <Toggle $on><Icon><path stroke="#fff" strokeWidth="1.400" d="M6 2.500H15V15.500H2.500V6" /><rect x="0.500" y="0.500" width="4" height="4" stroke="#fff" /></Icon></Toggle>
      <Toggle $w={16}><Arrow $w={8} /></Toggle>
    </Group>
    <Group>
      <Toggle $on><Icon><path fill="#fff" stroke="none" d="M7 0L9 7L14 15L8.500 13L7 16L5.500 13L0 15L5 7Z" /><circle cx="13" cy="3.500" r="2.300" stroke="#fff" /></Icon></Toggle>
      <Toggle $w={26}><Icon><path fill={C.ink} stroke="none" d={person} /><path strokeWidth="1.500" d="M14 0L11 3H14L11 7" /></Icon></Toggle>
      <Toggle $w={22}><Icon><path fill={C.ink} stroke="none" d={person} /></Icon></Toggle>
      <Toggle $w={24}><Text $ls={-0.6}>1:1</Text></Toggle>
      <Toggle $w={6}><Arrow $w={8} /></Toggle>
      <Toggle $w={3} />
    </Group>
    <Group>
      <Toggle $w={25}><Icon><circle cx="8" cy="8" r="4.300" strokeWidth="3.400" /><circle cx="8" cy="8" r="6.900" strokeWidth="2.200" strokeDasharray="2.710 2.710" /></Icon></Toggle>
      <Toggle $w={14}><Arrow $w={8} /></Toggle>
    </Group>
    <Group><Toggle $w={23}><Icon crisp><path strokeWidth="2" stroke="#eee" d="M8 0V16M0 8H16" /></Icon></Toggle></Group>
    <Group><Toggle $w={24}><Icon><rect x="0.500" y="0.500" width="5" height="5" /><circle cx="12.500" cy="5.500" r="3" /><path d="M6.500 9L9.500 15.500H3.500Z" /></Icon></Toggle></Group>
    <Group>
      <Toggle $w={24}><Icon><rect x="0.500" y="1.500" width="15" height="12" strokeWidth="1.200" /><path fill={C.ink} stroke="none" d="M13.500 3.500V8L9 3.500ZM2.500 11.500V7L7 11.500Z" /></Icon></Toggle>
      <Toggle $w={24}><Icon crisp><path strokeWidth="2" stroke="#e8e8e8" d="M0 2H16M0 8H16M0 14H16" /></Icon></Toggle>
    </Group>
  </StatusTools>
);

/* ---------- taskbar ---------- */

const Taskbar = styled.footer`
  height: 40px;
  flex: none;
  display: flex;
  background: linear-gradient(90deg, #1d1c21, #1f1e22 35%, #262624 50%, #222123 75%, #1e1d22);
  color: #fff;
`;

const TaskSearch = styled.div`
  width: 344px;
  background: #f2f2f2;
  border: 1px solid #bdbdbd;
  color: #3c3c3c;
  display: flex;
  align-items: center;
  padding-left: 11px;
  gap: 11px;
  font-size: 15px;
`;

const TaskButton = styled.div<{ $w: number; $line?: boolean; $active?: boolean }>`
  width: ${(p) => p.$w}px;
  display: flex;
  align-items: center;
  justify-content: center;
  background: ${(p) => (p.$active ? "#535351" : "transparent")};
  box-shadow: ${(p) => (p.$line ? "inset 0 -2px #76b9ed" : "none")};
`;

const CadTile = styled.div`
  width: 24px;
  height: 24px;
  background: #fbeee8;
  display: flex;
  align-items: center;
  justify-content: center;
`;

const Tray = styled.div`
  margin-left: auto;
  display: flex;
  align-items: center;
`;

const Clock = styled.div`
  width: 78px;
  text-align: center;
  line-height: 19px;
  padding-bottom: 1px;
`;

const Badge = styled.i`
  position: absolute;
  right: -8px;
  bottom: -8px;
  width: 17px;
  height: 17px;
  border: 1px solid #a5a5a5;
  border-radius: 50%;
  background: #2b2b2c;
  font: 12px/14px "Open Sans", sans-serif;
  text-align: center;
  letter-spacing: 0;
`;

const Notify = styled.div`
  position: relative;
  margin: 0 21px 0 5px;
`;

const ShowDesktop = styled.i`
  width: 4px;
  height: 40px;
  border-left: 1px solid #6e6e70;
`;

const DesktopBar = () => (
  <Taskbar>
    <TaskButton $w={48}><svg width="16" height="16" viewBox="0 0 16 16"><path fill="#fff" d="M0 2.300L6.500 1.400V7.500H0ZM7.300 1.300L16 0V7.500H7.300ZM0 8.300H6.500V14.600L0 13.700ZM7.300 8.300H16V16L7.300 14.700Z" /></svg></TaskButton>
    <TaskSearch>
      <svg width="17" height="17" viewBox="0 0 17 17" fill="none" stroke="#2b2b2b" strokeWidth="1.300"><circle cx="10.500" cy="6" r="5.300" /><path d="M7 10L0.500 16.500" /></svg>
      <Text $ls={-0.33}>Digite aqui para pesquisar</Text>
    </TaskSearch>
    <TaskButton $w={48}><svg width="16" height="16" viewBox="0 0 16 16"><circle cx="8" cy="8" r="6.800" fill="none" stroke="#fff" strokeWidth="2" /></svg></TaskButton>
    <TaskButton $w={48}><svg width="16" height="16" viewBox="0 0 16 16" fill="none" stroke="#fff" strokeWidth="1.200"><path d="M0.500 0V2.500H11.500V0M0.500 5.500H11.500V11.500H0.500ZM0.500 16V14.500H11.500V16M14.500 0V3M14.500 8V16" /><rect x="13" y="4" width="3" height="3" fill="#fff" stroke="none" /></svg></TaskButton>
    <TaskButton $w={54}>
      <svg width="22" height="18" viewBox="0 0 22 18"><path d="M0 0H9L10 2H22V18H0Z" fill="#f7c544" /><path d="M0 0H9L10 2L9 3.500H0Z" fill="#d99a12" /><path d="M1 4H22V17H0Z" fill="#ffd867" /><path d="M4 10H18V18H13.500V14H8.500V18H4Z" fill="#3b97dc" /></svg>
    </TaskButton>
    <Cell $w={2} />
    <TaskButton $w={40} $line>
      <svg width="22" height="22" viewBox="0 0 22 22"><circle cx="11" cy="11" r="11" fill="#ffcd40" /><path d="M11 11L1.500 5.500A11 11 0 0 1 20.500 5.500L11 5.500Z" fill="#db4437" /><path d="M1.500 5.500A11 11 0 0 0 11 22L15.800 13.800L6.200 13.800Z" fill="#1f9d57" /><path d="M11 5.500H20.500A11 11 0 0 1 11 22L15.800 13.800Z" fill="#ffcd40" /><circle cx="11" cy="11" r="5.200" fill="#f4f4f4" /><circle cx="11" cy="11" r="4.100" fill="#4285f4" /></svg>
    </TaskButton>
    <Cell $w={9} />
    <TaskButton $w={40} $line><CadTile><ALogo w={17} h={19} /></CadTile></TaskButton>
    <Cell $w={5} />
    <TaskButton $w={48} $line $active>
      <svg width="23" height="22" viewBox="0 0 23 22"><path d="M20 2L22 4L20 20L17 21Z" fill="#7a5a35" /><path d="M8 1L20 2L19 21L12 21Z" fill="#dfe9ea" /><path d="M7 2L20 2L13 20L0 16Z" fill="#62b4c6" /><path d="M7 2L20 2L18.500 5.500L5.500 5Z" fill="#c6e2e6" /><path d="M8 1.500H21" stroke="#777" strokeDasharray="1 1" /></svg>
    </TaskButton>
    <Tray>
      <Cell $w={24}><svg width="12" height="7" viewBox="0 0 12 7"><path d="M0.700 6.300L6 1L11.300 6.300" fill="none" stroke="#fff" strokeWidth="1.300" /></svg></Cell>
      <Cell $w={24}><svg width="16" height="16" viewBox="0 0 16 16"><circle cx="7" cy="8" r="5" fill="none" stroke="#f1b43c" strokeWidth="2" /><path d="M4 6L7 9L13 1" fill="none" stroke="#f4f4f4" strokeWidth="1.300" /><circle cx="10.500" cy="11.500" r="4" fill="#d2232a" /><path d="M9.300 11V9.800A1.200 1.200 0 0 1 11.700 9.800V11" fill="none" stroke="#fff" strokeWidth="0.900" /><rect x="8.500" y="10.800" width="4" height="2.700" fill="#fff" /></svg></Cell>
      <Cell $w={24}><svg width="16" height="10" viewBox="0 0 16 10"><rect x="0.500" y="0.500" width="13" height="9" fill="none" stroke="#fff" /><rect x="2" y="2" width="5" height="6" fill="#fff" /><rect x="14" y="3" width="1.500" height="4" fill="#fff" /></svg></Cell>
      <Cell $w={24}><svg width="17" height="12" viewBox="0 0 17 12" fill="none" stroke="#fff"><path d="M0.500 4H3L6.500 0.500V11.500L3 8H0.500Z" /><path d="M9 4Q10 6 9 8" /><path opacity=".7" d="M11.500 2.500Q13.500 6 11.500 9.500" /><path opacity=".45" d="M14 1Q17 6 14 11" /></svg></Cell>
      <Cell $w={29} $align="flex-end"><Text $ls={-0.45}>ENG</Text></Cell>
      <Clock><Text $ls={-0.45}>1:41 PM</Text><br /><Text $ls={-0.45}>9/16/2020</Text></Clock>
      <Notify>
        <svg width="16" height="16" viewBox="0 0 16 16"><path fill="#fff" d="M0 0H16V13H9L5 16V13H0Z" /><path stroke="#242326" strokeWidth="1.200" d="M3 3.500H13M3 6.500H13M3 9.500H10" /></svg>
        <Badge>1</Badge>
      </Notify>
      <ShowDesktop />
    </Tray>
  </Taskbar>
);

export default function App() {
  return (
    <Screen>
      <Global />
      <TopBar />
      <RibbonTabs>
        <RibbonTab $w={55} $active><Text $ls={-0.35}>Padrão</Text></RibbonTab>
        {TABS.map(([name, w, ls]) => <RibbonTab key={name} $w={w}><Text $ls={ls}>{name}</Text></RibbonTab>)}
        <Cell $w={24}>
          <svg width="24" height="18" viewBox="0 0 24 18"><rect x="0" y="3.500" width="13" height="8" rx="2" fill="#f2f2f2" /><path d="M4 9H9L6.500 6Z" fill="#20262f" /><path d="M17.500 6.500H23.500L20.500 9.500Z" fill="#d4d6da" /></svg>
        </Cell>
      </RibbonTabs>
      <Ribbon>
        <DrawPanel />
        <ModifyPanel />
        <AnnotatePanel />
        <LayersPanel />
        <BlockPanel />
        {COLLAPSED.map(([name, icon]) => (
          <Collapsed key={name}>{icon}<Text $ls={-0.35}>{name}</Text><Arrow $w={8} /></Collapsed>
        ))}
      </Ribbon>
      <DocTabs>
        <DocTab><Text>Iniciar</Text></DocTab>
        <DocTab $active>
          <Cell $w={91} $align="flex-start"><Text $ls={-0.35}>Desenho1</Text></Cell>
          <Icon w={9} h={12}><path strokeWidth="2" stroke="#a3a8b1" d="M0.500 2L8.500 10M8.500 2L0.500 10" /></Icon>
        </DocTab>
        <Cell $w={15} />
        <PlusTab><Plus /></PlusTab>
      </DocTabs>
      <Workspace>
        <GridLines />
        <Pin $x={4} $y={180}><Text $ls={-0.33}>[−][Superior][Estrutura de arame 2D]</Text></Pin>
        <Pin $x={1297} $y={183}>
          <svg width="50" height="11" viewBox="0 0 50 11" fill="none" stroke="#f4f4f4"><path strokeWidth="3" d="M1 7.500H11" /><path strokeWidth="1.500" d="M23.500 2.500V1.500H31V9H30" /><path strokeWidth="2.200" d="M22 4H28V10H22Z" /><path strokeWidth="2.200" d="M41.500 2L49 10M49 2L41.500 10" /></svg>
        </Pin>
        <Pin $x={1252} $y={211}><ViewCube /></Pin>
        <Pin $x={1272} $y={324}>
          <WcsPill>WCS<svg width="9" height="5" viewBox="0 0 9 5"><path d="M0.500 0.500H8.500L4.500 4.500Z" fill="none" stroke="#7c7f8b" /></svg></WcsPill>
        </Pin>
        <Pin $x={1323} $y={367}><NavBar><NavIcons /></NavBar></Pin>
        <Pin $x={11} $y={617}><Ucs /></Pin>
        <Pin $x={273} $y={672}>
          <CommandDock>
            <svg width="52" height="20" viewBox="0 0 52 20" fill="none" stroke="#b5b7ba">
              <path strokeWidth="1.400" strokeDasharray="1.500 1.500" d="M4.700 2V19M7.200 2V19M9 2V19" stroke="#9da1a7" />
              <path strokeWidth="2" d="M15 5L23 13M23 5L15 13" />
              <path strokeWidth="2.800" d="M36.500 18L43.500 11" /><path strokeWidth="2.500" d="M45.500 5A3.500 3.500 0 1 0 48.500 9" />
            </svg>
            <CommandInput>
              <svg width="16" height="12" viewBox="0 0 16 12" fill="none" stroke="#55585c"><path d="M0.500 0.500H15.500V11.500H0.500Z" strokeWidth="1.200" /><path d="M0 2H16" strokeWidth="2" /><path d="M2 5L5 7L2 9M6 9.500H10" /></svg>
              <Arrow $w={8} $c="#5a5d61" />
              <span>Digite um comando</span>
              <Arrow $w={7} $c="#44474b" />
            </CommandInput>
          </CommandDock>
        </Pin>
        <Pin $x={1012} $y={650}>
          <Watermark><WatermarkTitle>Ativar o Windows</WatermarkTitle><Text $ls={-0.36}>Acesse Configurações para ativar o Windows.</Text></Watermark>
        </Pin>
        <Pin $x={199} $y={441}><NotepadWindow /></Pin>
      </Workspace>
      <BottomBar>
        <ModelTab $w={70} $active>Modelo</ModelTab>
        <ModelTab $w={72}>Layout1</ModelTab>
        <ModelTab $w={71}>Layout2</ModelTab>
        <Cell $w={7} />
        <PlusTab $bottom><Plus /></PlusTab>
        <StatusBar />
      </BottomBar>
      <DesktopBar />
      <AppButton><ALogo w={24} h={27} /><Arrow $w={7} $c="#333" /></AppButton>
    </Screen>
  );
}
